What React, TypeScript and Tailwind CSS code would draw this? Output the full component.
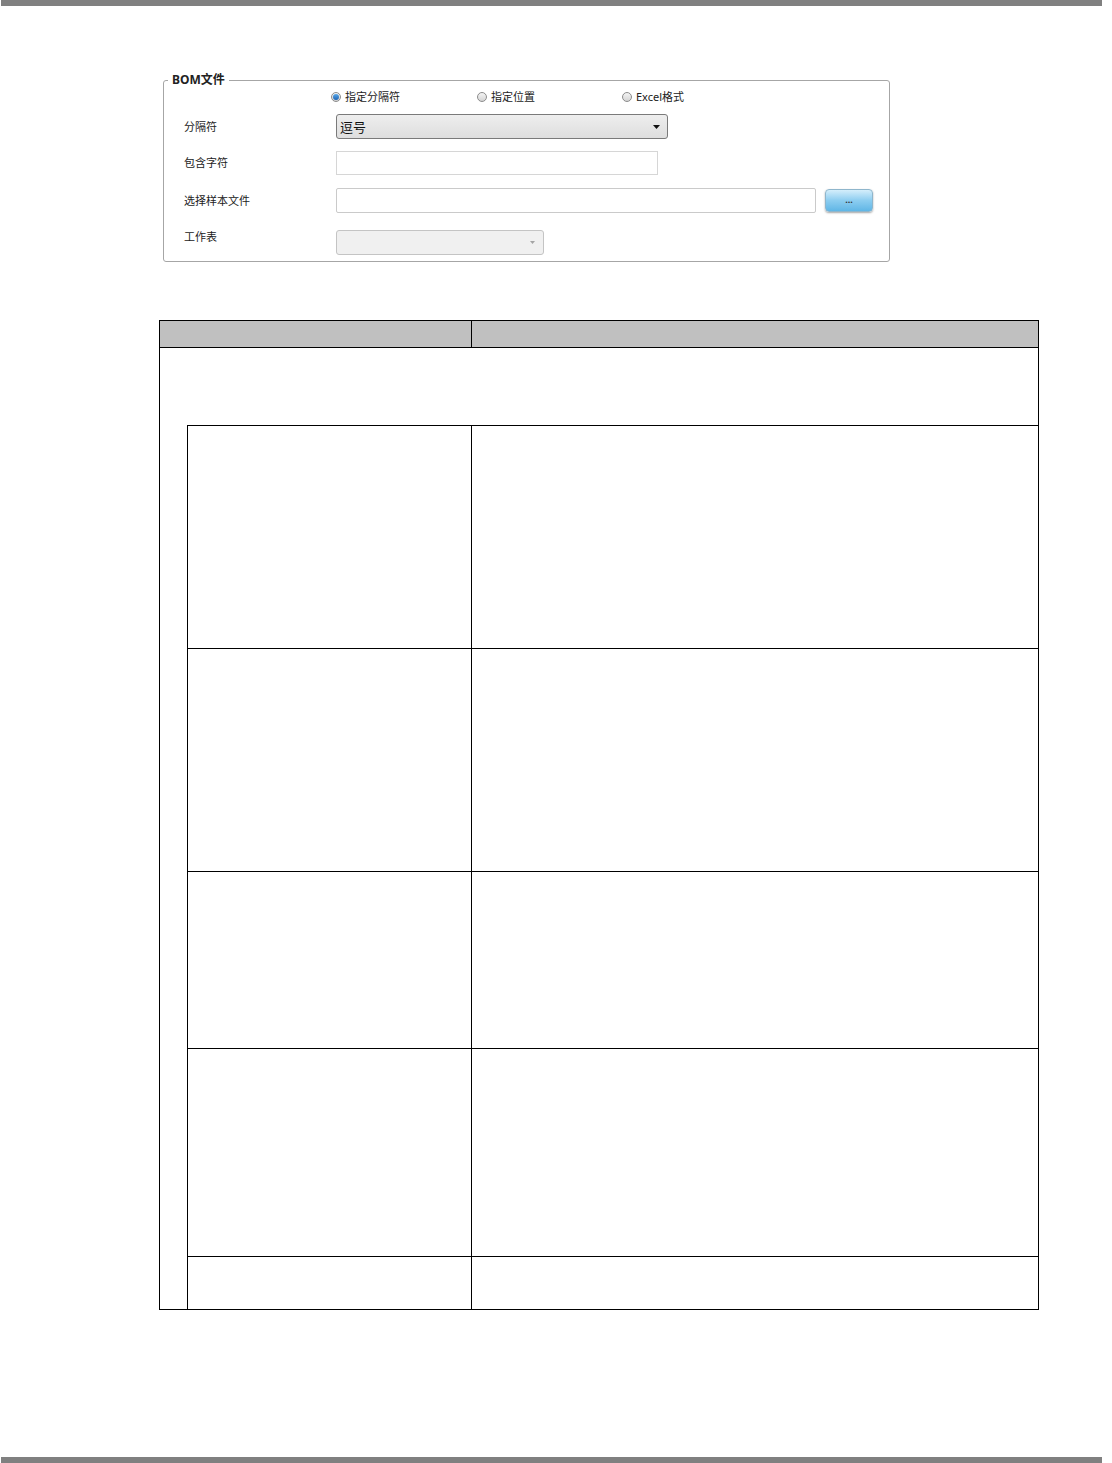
import React from "react";

const font = "font-['Noto_Sans','Noto_Sans_CJK_SC',sans-serif]";

function Radio({ label, checked, width }: { label: string; checked?: boolean; width: string }) {
  return (
    <div className={`flex items-center ${width}`}>
      <span className="flex h-[10px] w-[10px] items-center justify-center rounded-full border border-[#8c8c8c] bg-gradient-to-b from-[#f4f4f4] to-[#d4d4d4]">
        {checked && <span className="h-[6px] w-[6px] rounded-full bg-gradient-to-b from-[#5aa8e8] to-[#1c64b4]" />}
      </span>
      <span className="ml-[4px] text-[11px] leading-[12px] text-[#222]">{label}</span>
    </div>
  );
}

function Arrow({ color }: { color: string }) {
  return (
    <svg width="7" height="4" viewBox="0 0 7 4">
      <path d="M0 0 L7 0 L3.5 4 Z" fill={color} />
    </svg>
  );
}

function BomPanel() {
  return (
    <fieldset className="ml-[163px] mt-[67px] w-[727px] rounded-[3px] border border-[#a6a6a6] pb-[6px] pl-[20px]">
      <legend className="-ml-[16px] px-[4px] text-[12px] font-bold leading-[14px] text-[#222]">BOM文件</legend>

      <div className="mt-[4px] flex h-[12px] items-center pl-[147px]">
        <Radio label="指定分隔符" checked width="w-[146px]" />
        <Radio label="指定位置" width="w-[145px]" />
        <Radio label="Excel格式" width="w-[100px]" />
      </div>

      <div className="mt-[11px] flex items-center">
        <span className="w-[152px] text-[11px] leading-[12px] text-[#222]">分隔符</span>
        <div className="flex h-[25px] w-[332px] items-center justify-between rounded-[3px] border border-[#7a7a7a] bg-gradient-to-b from-[#eeeeee] to-[#dedede] pl-[3px] pr-[7px]">
          <span className="text-[13px] leading-[14px] text-[#111]">逗号</span>
          <Arrow color="#111" />
        </div>
      </div>

      <div className="mt-[12px] flex items-center">
        <span className="w-[152px] text-[11px] leading-[12px] text-[#222]">包含字符</span>
        <div className="h-[24px] w-[322px] border border-[#d6d6d6] bg-white" />
      </div>

      <div className="mt-[13px] flex items-center">
        <span className="w-[152px] text-[11px] leading-[12px] text-[#222]">选择样本文件</span>
        <div className="h-[25px] w-[480px] rounded-[2px] border border-[#cacaca] bg-white" />
        <button className="ml-[9px] flex h-[23px] w-[48px] items-center justify-center rounded-[4px] border border-[#8fb6cc] bg-gradient-to-b from-[#d4eefb] via-[#8ccdf0] to-[#5fb6e6] pb-[3px] text-[9px] font-bold leading-[9px] text-[#333] shadow-[0_1px_2px_rgba(0,0,0,0.35)]">
          ...
        </button>
      </div>

      <div className="mt-[17px] flex items-start">
        <span className="mt-[1px] w-[152px] text-[11px] leading-[12px] text-[#222]">工作表</span>
        <div className="flex h-[25px] w-[208px] items-center justify-end rounded-[3px] border border-[#c4c4c4] bg-[#f0f0f0] pr-[8px]">
          <svg width="5" height="3" viewBox="0 0 5 3">
            <path d="M0 0 L5 0 L2.5 3 Z" fill="#a4a4a4" />
          </svg>
        </div>
      </div>
    </fieldset>
  );
}

const rows = [223, 223, 177, 208, 53];

function SpecTable() {
  return (
    <div className="ml-[159px] mt-[58px] w-[880px] border border-black">
      <div className="flex h-[27px] border-b border-black bg-[#c0c0c0]">
        <div className="w-[312px] border-r border-black" />
        <div className="flex-1" />
      </div>
      <div className="h-[77px]" />
      <div className="ml-[27px] border-l border-black">
        {rows.map((h, i) => (
          <div key={i} className="flex border-t border-black" style={{ height: h }}>
            <div className="w-[284px] border-r border-black" />
            <div className="flex-1" />
          </div>
        ))}
      </div>
    </div>
  );
}

export default function App() {
  return (
    <div className={`flex h-[1463px] w-[1112px] flex-col bg-white ${font}`}>
      <div className="ml-[1px] h-[6px] w-[1101px] bg-[#808080]" />
      <BomPanel />
      <SpecTable />
      <div className="ml-[1px] mt-auto h-[6px] w-[1101px] bg-[#808080]" />
    </div>
  );
}
